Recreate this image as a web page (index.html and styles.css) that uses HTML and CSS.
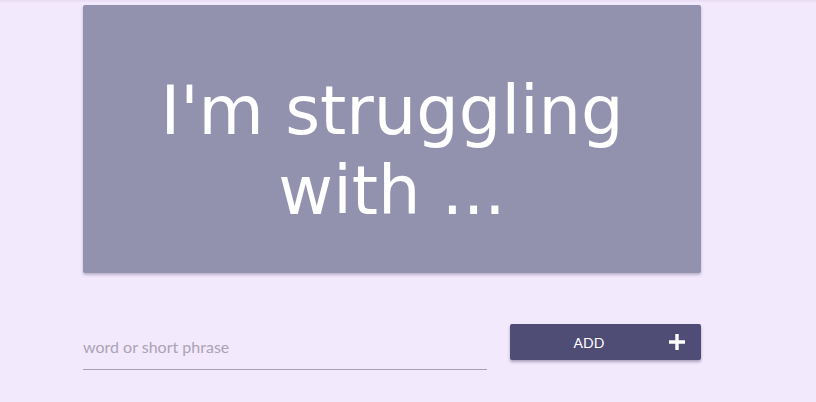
FILE: index.html
```html
<!DOCTYPE html>
<html>
<head>
<meta charset="utf-8">
<link rel="stylesheet" href="styles.css">
</head>
<body>
<div class="topbar"></div>
<main class="page">
  <section class="card">
    <h1 class="title">I'm struggling<br>with ...</h1>
  </section>
  <div class="form-row">
    <div class="field">
      <input class="input" type="text" placeholder="word or short phrase">
    </div>
    <button class="add-btn">
      <span class="add-label">ADD</span>
      <svg class="plus" width="18" height="18" viewBox="0 0 18 18"><path d="M9 1v16M1 9h16" stroke="#fff" stroke-width="3.4" fill="none"/></svg>
    </button>
  </div>
</main>
</body>
</html>
```
FILE: styles.css
```css
html, body {
  margin: 0;
  padding: 0;
  background: #f3e9fd;
  width: 816px;
  height: 402px;
  overflow: hidden;
}
.topbar {
  height: 2px;
  background: #eadff4;
}
.page {
  padding: 3px 0 0 83px;
}
.card {
  width: 618px;
  height: 268px;
  background: #9291ae;
  border-radius: 2px;
  box-shadow: 0 2px 3px rgba(60, 50, 90, 0.3);
  display: flex;
  align-items: center;
  justify-content: center;
  box-sizing: border-box;
  padding-top: 24px;
}
.title {
  margin: 0;
  color: #fff;
  font-family: "DejaVu Sans", sans-serif;
  font-weight: normal;
  font-size: 67px;
  line-height: 80px;
  text-align: center;
}
.form-row {
  display: flex;
  align-items: flex-start;
  gap: 23px;
  margin-top: 51px;
  width: 618px;
}
.field {
  width: 404px;
  padding-top: 13px;
}
.input {
  width: 100%;
  box-sizing: border-box;
  border: none;
  border-bottom: 1px solid #a89fb3;
  background: transparent;
  padding: 0 0 13px 0;
  font-family: "Lato", sans-serif;
  font-size: 16px;
  color: #555;
  outline: none;
}
.input::placeholder {
  color: #aaa3b3;
}
.add-btn {
  width: 191px;
  height: 36px;
  background: #4f4c75;
  border: none;
  border-radius: 2px;
  box-shadow: 0 2px 3px rgba(40, 30, 70, 0.35);
  display: flex;
  align-items: center;
  padding: 0 15px 0 0;
  color: #fff;
  font-family: "Lato", sans-serif;
  font-size: 14px;
}
.add-label {
  flex: 1;
  text-align: center;
}
.plus {
  display: block;
}
```
